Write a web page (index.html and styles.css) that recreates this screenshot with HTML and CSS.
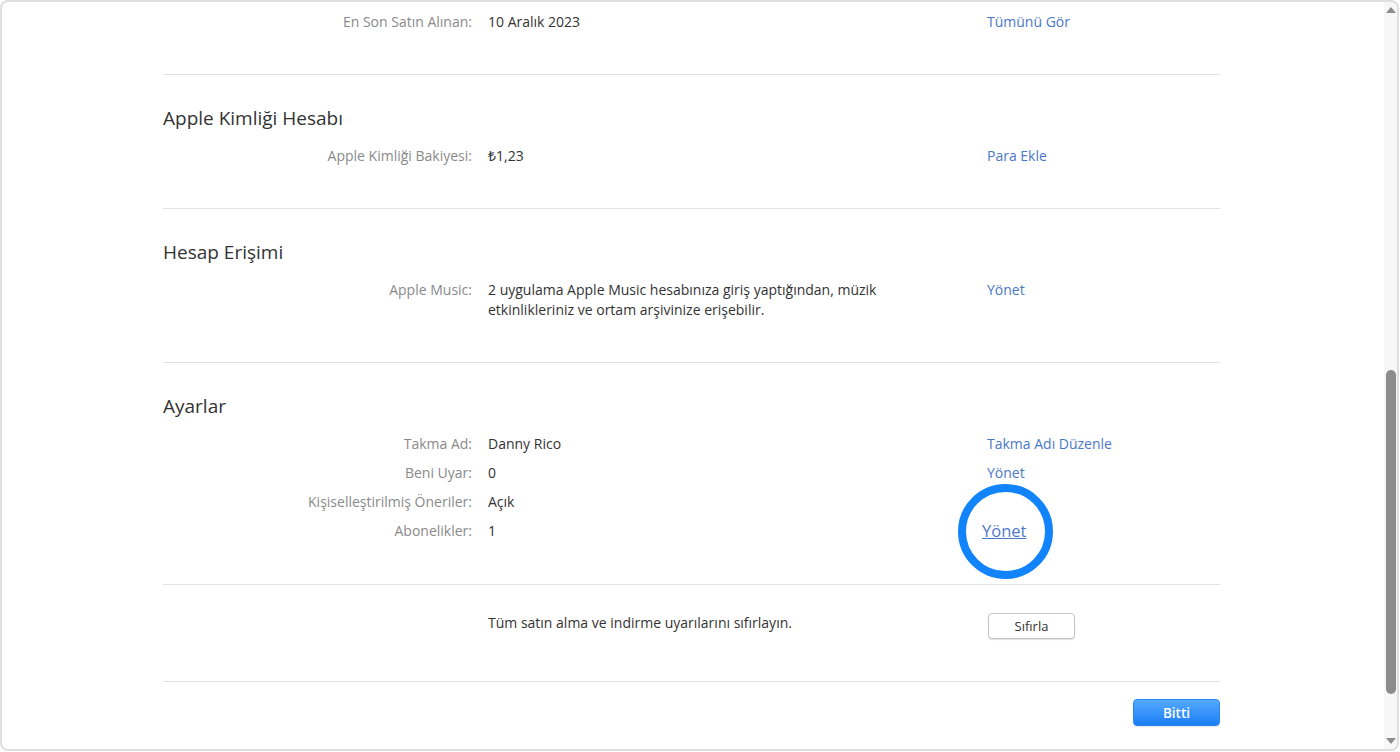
FILE: index.html
```html
<!DOCTYPE html>
<html lang="tr">
<head>
<meta charset="utf-8">
<title>Hesap Bilgileri</title>
<link rel="stylesheet" href="styles.css">
</head>
<body>
<div class="window">
  <div class="content">
    <section class="section first">
      <div class="grid">
        <div class="label">En Son Satın Alınan:</div>
        <div class="value">10 Aralık 2023</div>
        <a class="link">Tümünü Gör</a>
      </div>
    </section>
    <section class="section">
      <h2 class="heading">Apple Kimliği Hesabı</h2>
      <div class="grid">
        <div class="label">Apple Kimliği Bakiyesi:</div>
        <div class="value">₺1,23</div>
        <a class="link">Para Ekle</a>
      </div>
    </section>
    <section class="section">
      <h2 class="heading">Hesap Erişimi</h2>
      <div class="grid">
        <div class="label">Apple Music:</div>
        <div class="value">2 uygulama Apple Music hesabınıza giriş yaptığından, müzik<br>etkinlikleriniz ve ortam arşivinize erişebilir.</div>
        <a class="link">Yönet</a>
      </div>
    </section>
    <section class="section">
      <h2 class="heading">Ayarlar</h2>
      <div class="grid">
        <div class="label">Takma Ad:</div>
        <div class="value">Danny Rico</div>
        <a class="link">Takma Adı Düzenle</a>
        <div class="label">Beni Uyar:</div>
        <div class="value">0</div>
        <a class="link">Yönet</a>
        <div class="label">Kişiselleştirilmiş Öneriler:</div>
        <div class="value">Açık</div>
        <div></div>
        <div class="label">Abonelikler:</div>
        <div class="value">1</div>
        <div><a class="link highlighted">Yönet<span class="ring"></span></a></div>
      </div>
    </section>
    <section class="section reset">
      <div class="grid">
        <div class="label"></div>
        <div class="value">Tüm satın alma ve indirme uyarılarını sıfırlayın.</div>
        <div><button class="btn">Sıfırla</button></div>
      </div>
    </section>
    <section class="section footer">
      <button class="btn primary">Bitti</button>
    </section>
  </div>
  <div class="scrollbar">
    <div class="arrow up"></div>
    <div class="track"><div class="thumb"></div></div>
    <div class="arrow down"></div>
  </div>
</div>
</body>
</html>
```
FILE: styles.css
```css
* { box-sizing: border-box; }
html, body { margin: 0; padding: 0; background: #fff; }
body {
  font-family: "Open Sans", "Noto Sans", sans-serif;
  font-size: 14px;
  color: #333;
}
.window {
  width: 1399px;
  height: 751px;
  border: 2px solid #dedede;
  border-radius: 8px;
  display: flex;
  overflow: hidden;
  background: #fff;
}
.content {
  flex: 1;
  padding-left: 161px;
}
.section {
  width: 1057px;
  border-top: 1px solid #e2e2e2;
  padding: 29px 0 42px;
}
.section.first {
  border-top: none;
  padding-top: 10px;
  padding-bottom: 42px;
}
.heading {
  margin: 0 0 14px;
  font-weight: 400;
  font-size: 19px;
  line-height: 28px;
  color: #333;
}
.grid {
  display: grid;
  grid-template-columns: 309px 483px auto;
  column-gap: 16px;
  row-gap: 9px;
  line-height: 20px;
}
.label { text-align: right; color: #8a8a8a; }
.value { color: #333; }
.link { color: #4a78c8; cursor: pointer; justify-self: start; }
.highlighted {
  position: relative;
  display: inline-block;
  font-size: 16.5px;
  text-decoration: underline;
  margin-left: -5px;
  color: #4c79c9;
}
.ring {
  position: absolute;
  left: 50%;
  top: 50%;
  width: 95px;
  height: 95px;
  margin-left: -46px;
  margin-top: -47px;
  border: 8px solid #1184fb;
  border-radius: 50%;
}
.reset { padding: 28px 0 42px; }
.reset .grid { align-items: start; }
.btn {
  font-family: inherit;
  font-size: 13px;
  width: 87px;
  height: 26px;
  border: 1px solid #c6c6c6;
  border-radius: 4px;
  background: #fff;
  color: #333;
  box-shadow: 0 1px 1px rgba(0,0,0,0.12);
  padding: 0;
  margin-left: 1px;
  display: block;
}
.footer {
  padding: 17px 0 0;
  display: flex;
  justify-content: flex-end;
}
.btn.primary {
  width: 87px;
  height: 27px;
  border: 1px solid #2a86f0;
  background: linear-gradient(#55aaff, #1b7ef6);
  color: #fff;
  font-weight: 600;
  font-size: 13.5px;
}
.scrollbar {
  width: 13px;
  background: #f7f7f7;
  display: flex;
  flex-direction: column;
  align-items: center;
}
.arrow { width: 0; height: 0; border-left: 5px solid transparent; border-right: 5px solid transparent; }
.arrow.up { border-bottom: 6px solid #8c8c8c; margin-top: 5px; }
.arrow.down { border-top: 6px solid #8c8c8c; margin-bottom: 5px; }
.track { flex: 1; width: 100%; display: flex; justify-content: center; }
.thumb {
  margin-top: 357px;
  width: 10px;
  height: 324px;
  border-radius: 5px;
  background: #8c8c8c;
}
```
